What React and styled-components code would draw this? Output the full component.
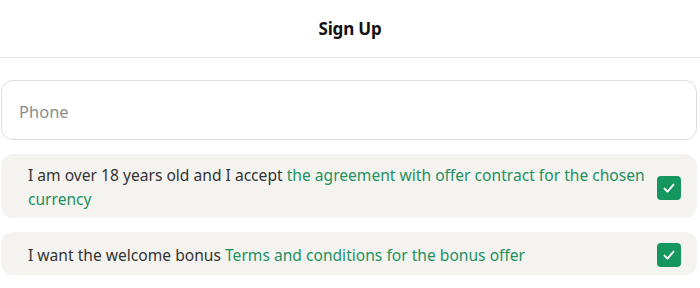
import React from 'react';
import styled, { createGlobalStyle } from 'styled-components';

const GlobalStyle = createGlobalStyle`
  html, body {
    margin: 0;
    padding: 0;
    background: #fff;
  }
  body {
    font-family: "Noto Sans", "Open Sans", sans-serif;
    color: #333;
  }
`;

const Page = styled.div`
  width: 700px;
  height: 288px;
  overflow: hidden;
  background: #fff;
`;

const Header = styled.header`
  height: 57px;
  border-bottom: 1px solid #e6e6e6;
  display: flex;
  align-items: center;
  justify-content: center;
`;

const Title = styled.h1`
  margin: 0;
  font-size: 17px;
  font-weight: 700;
  color: #111;
  letter-spacing: -0.2px;
`;

const Form = styled.form`
  display: flex;
  flex-direction: column;
  gap: 14px;
  padding: 22px 3px 0 1px;
`;

const Input = styled.input`
  box-sizing: border-box;
  height: 60px;
  width: 100%;
  border: 1px solid #dedede;
  border-radius: 12px;
  padding: 3px 17px 0;
  font-family: inherit;
  font-size: 16.5px;
  color: #333;
  outline: none;
  &::placeholder {
    color: #8d8d8d;
  }
`;

const Row = styled.label`
  box-sizing: border-box;
  min-height: 43px;
  display: flex;
  align-items: center;
  gap: 8px;
  padding: 9px 16px 7px 27px;
  background: #f4f3f0;
  border-radius: 12px;
  cursor: pointer;
`;

const Text = styled.span`
  flex: 1;
  font-size: 15.6px;
  line-height: 24px;
  color: #333;
`;

const Link = styled.a`
  color: #23915f;
  text-decoration: none;
`;

const Box = styled.span`
  flex-shrink: 0;
  width: 24px;
  height: 24px;
  margin-top: 1px;
  border-radius: 4px;
  background: #16965f;
  display: flex;
  align-items: center;
  justify-content: center;
`;

function Check() {
  return (
    <Box>
      <svg width="16" height="16" viewBox="0 0 16 16" fill="none">
        <path d="M3.5 8.6l3 3L12.5 4.6" stroke="#fff" strokeWidth="1.9" strokeLinecap="round" strokeLinejoin="round" />
      </svg>
    </Box>
  );
}

export default function App() {
  return (
    <Page>
      <GlobalStyle />
      <Header>
        <Title>Sign Up</Title>
      </Header>
      <Form onSubmit={e => e.preventDefault()}>
        <Input type="tel" placeholder="Phone" />
        <Row>
          <Text>
            I am over 18 years old and I accept{' '}
            <Link href="#">the agreement with offer contract for the chosen currency</Link>
          </Text>
          <Check />
        </Row>
        <Row>
          <Text>
            I want the welcome bonus <Link href="#">Terms and conditions for the bonus offer</Link>
          </Text>
          <Check />
        </Row>
      </Form>
    </Page>
  );
}
